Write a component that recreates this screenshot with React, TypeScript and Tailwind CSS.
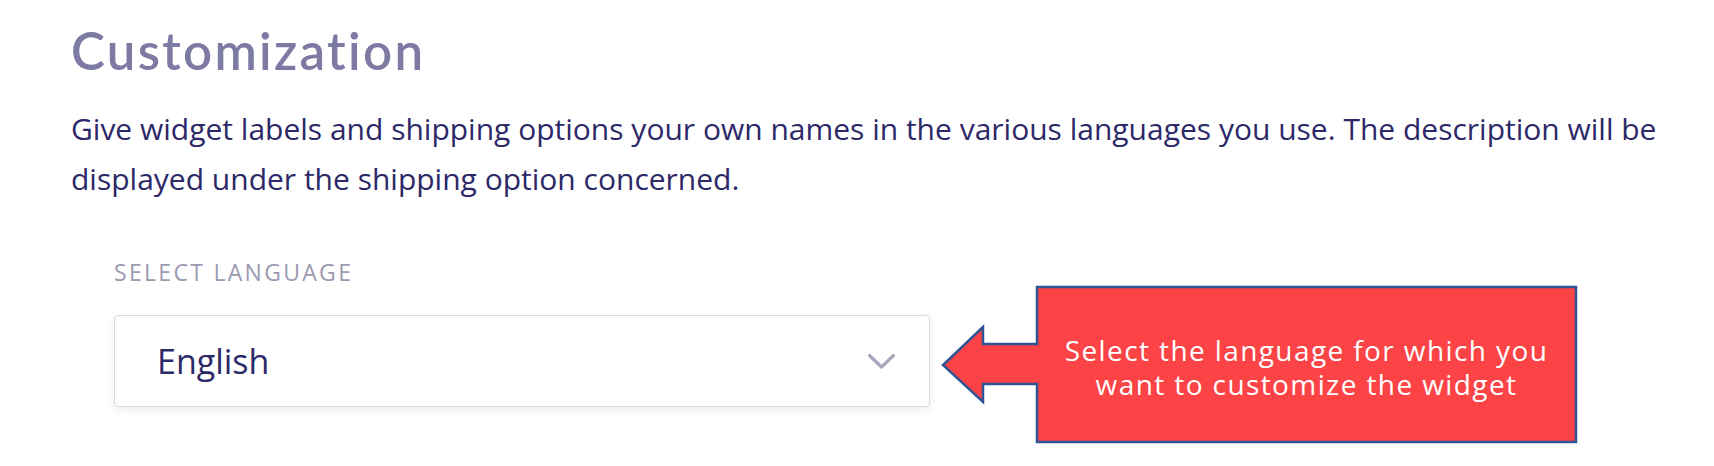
/** 吹き出し：左向き矢印つきの赤いボックス */
function ArrowCallout({ text }: { text: string[] }) {
  return (
    <div className="relative h-[160px] w-[640px] shrink-0">
      <svg
        className="absolute inset-0"
        width="640"
        height="160"
        viewBox="0 0 640 160"
        aria-hidden
      >
        <polygon
          points="97,2 636,2 636,157 97,157 97,99 43,99 43,117 3,80 43,42 43,59 97,59"
          fill="#fc4346"
          stroke="#2f5597"
          strokeWidth="2.5"
          strokeLinejoin="miter"
        />
      </svg>
      <div className="relative ml-[97px] flex h-[160px] w-[539px] flex-col items-center justify-center pt-[4px] text-center font-['Open_Sans',sans-serif] text-[28px] leading-[34px] tracking-[0.05em] text-white">
        {text.map((line) => (
          <span key={line} className="block">
            {line}
          </span>
        ))}
      </div>
    </div>
  );
}

export default function App() {
  return (
    <div className="min-h-[466px] w-[1714px] bg-white pl-[71px] pt-[25px]">
      <h1 className="font-['Lato',sans-serif] text-[51px] font-semibold leading-none tracking-[0.045em] text-[#7d7aa4]">
        Customization
      </h1>

      <p className="mt-[28px] font-['Open_Sans',sans-serif] text-[30px] leading-[50px] text-[#2d2968]">
        Give widget labels and shipping options your own names in the various languages you use. The description will be
        <br />
        displayed under the shipping option concerned.
      </p>

      <div className="ml-[43px] mt-[57px]">
        <div className="font-['Open_Sans',sans-serif] text-[23px] leading-none tracking-[0.1em] text-[#9c9ab0]">
          SELECT LANGUAGE
        </div>

        <div className="mt-[31px] flex items-start">
          <button
            type="button"
            className="flex h-[92px] w-[816px] shrink-0 items-center justify-between rounded-[4px] border border-[#d9d8e1] bg-white pl-[42px] pr-[33px] shadow-[0_3px_8px_rgba(40,36,90,0.08)]"
          >
            <span className="font-['Open_Sans',sans-serif] text-[34px] leading-none text-[#2d2968]">
              English
            </span>
            <svg width="29" height="17" viewBox="0 0 29 17" aria-hidden>
              <polyline
                points="2.5,2.5 14.5,14 26.5,2.5"
                fill="none"
                stroke="#a8a6ba"
                strokeWidth="3.2"
                strokeLinecap="round"
                strokeLinejoin="round"
              />
            </svg>
          </button>

          <div className="-mt-[30px] ml-[10px]">
            <ArrowCallout
              text={['Select the language for which you', 'want to customize the widget']}
            />
          </div>
        </div>
      </div>
    </div>
  );
}
